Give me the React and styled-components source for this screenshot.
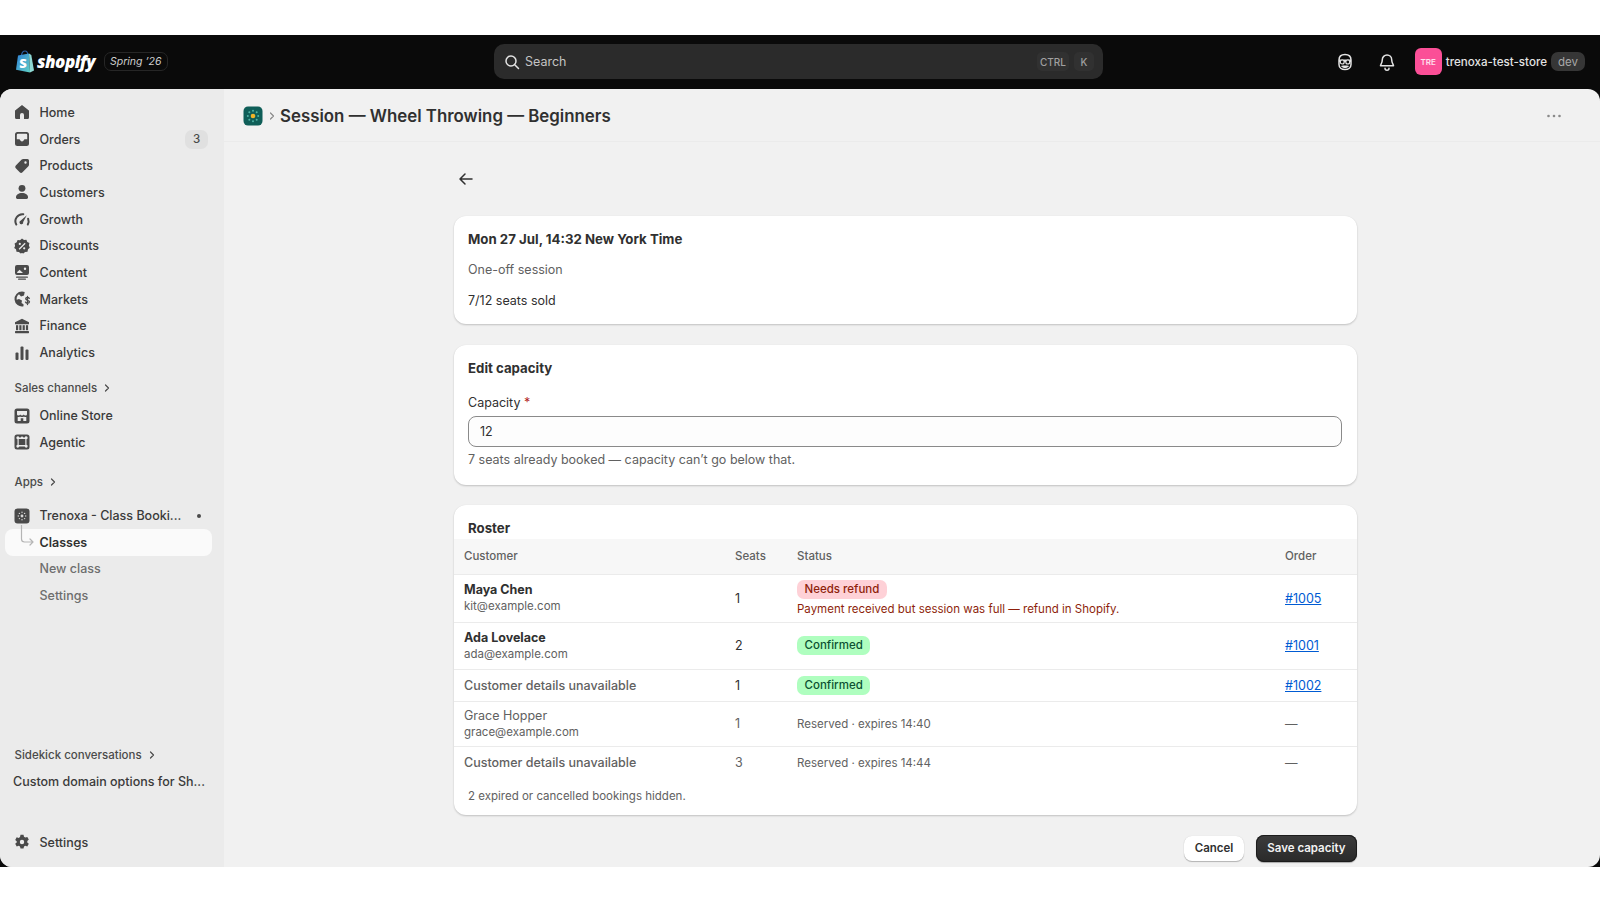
import React from "react";
import styled, { createGlobalStyle } from "styled-components";

const GlobalStyle = createGlobalStyle`
  html, body {
    margin: 0;
    padding: 0;
    height: 100%;
    background: #fff;
    overflow: hidden;
  }
  * { box-sizing: border-box; }
  body {
    font-family: Inter, "Noto Sans", sans-serif;
    font-size: 12.5px;
    color: #303030;
  }
`;

const Page = styled.div`
  display: flex;
  flex-direction: column;
  height: 900px;
  background: #fff;
`;

const Band = styled.div`
  flex: 0 0 ${(p) => p.$h}px;
  background: #fff;
`;

const Shell = styled.div`
  flex: 1;
  min-height: 0;
  display: flex;
  flex-direction: column;
  background: #0a0a0a;
`;

const TopBar = styled.header`
  flex: 0 0 54px;
  display: flex;
  align-items: center;
  padding: 0 15px;
`;

const Brand = styled.div`
  width: 479px;
  display: flex;
  align-items: center;
`;

const LogoText = styled.span`
  font-family: "Open Sans", sans-serif;
  font-style: italic;
  font-weight: 800;
  font-size: 17px;
  letter-spacing: -0.5px;
  color: #fff;
  margin-left: 2px;
`;

const SeasonPill = styled.span`
  margin-left: 9px;
  height: 19px;
  padding: 0 5px;
  display: inline-flex;
  align-items: center;
  border: 1px solid #262626;
  border-radius: 7px;
  font-size: 10.5px;
  font-style: italic;
  color: #cfcfcf;
`;

const SearchBox = styled.div`
  width: 609px;
  height: 35px;
  display: flex;
  align-items: center;
  gap: 3px;
  padding: 0 9px 0 8px;
  background: #2b2b2b;
  border-radius: 10px;
  color: #c4c4c4;
  font-size: 12.5px;
`;

const SearchLabel = styled.span`
  flex: 1;
`;

const Kbd = styled.span`
  height: 19px;
  margin-left: 2px;
  padding: 0 3px;
  display: inline-flex;
  align-items: center;
  justify-content: center;
  min-width: 20px;
  background: #313131;
  border-radius: 5px;
  font-size: 10px;
  font-weight: 500;
  color: #a0a0a0;
`;

const TopActions = styled.div`
  margin-left: auto;
  display: flex;
  align-items: center;
`;

const TopIcon = styled.span`
  width: 20px;
  height: 20px;
  margin-right: ${(p) => p.$gap}px;
  display: inline-flex;
  color: #e3e3e3;
`;

const Avatar = styled.span`
  width: 27px;
  height: 27px;
  display: inline-flex;
  align-items: center;
  justify-content: center;
  background: #fb4f97;
  border-radius: 6px;
  font-size: 8px;
  font-weight: 600;
  color: #ffe0ee;
`;

const StoreName = styled.span`
  margin-left: 4px;
  font-weight: 550;
  font-size: 11.6px;
  color: #e3e3e3;
`;

const DevPill = styled.span`
  margin-left: 4px;
  height: 19px;
  padding: 0 7px;
  display: inline-flex;
  align-items: center;
  background: #363636;
  border-radius: 7px;
  font-size: 11.5px;
  color: #a8a8a8;
`;

const Body = styled.div`
  flex: 1;
  min-height: 0;
  display: flex;
  border-radius: 12px;
  overflow: hidden;
  background: #f1f1f1;
`;

const Sidebar = styled.aside`
  flex: 0 0 224px;
  display: flex;
  flex-direction: column;
  padding: 10.5px 0 11.5px;
  background: #ebebeb;
`;

const NavItem = styled.div`
  position: relative;
  flex: 0 0 26.7px;
  display: flex;
  align-items: center;
  gap: 7.5px;
  padding-left: 12px;
  padding-right: 16px;
  font-weight: 550;
  color: #3a3a3a;
  white-space: nowrap;
`;

const NavIcon = styled.span`
  width: 20px;
  height: 20px;
  display: inline-flex;
  color: #4a4a4a;
`;

const NavLabel = styled.span`
  flex: 1;
`;

const CountBadge = styled.span`
  width: 23px;
  height: 19px;
  display: inline-flex;
  align-items: center;
  justify-content: center;
  background: #e0e0e0;
  border-radius: 7px;
  font-size: 11.5px;
  color: #4a4a4a;
`;

const PinDot = styled.span`
  width: 4px;
  height: 4px;
  margin-right: 7px;
  border-radius: 50%;
  background: #4a4a4a;
`;

const SubItem = styled.div`
  position: relative;
  flex: 0 0 26.7px;
  display: flex;
  align-items: center;
  margin: 0 12px 0 5px;
  padding-left: 34.5px;
  border-radius: 8px;
  font-weight: ${(p) => (p.$active ? 600 : 500)};
  color: ${(p) => (p.$active ? "#303030" : "#6e6e6e")};
  background: ${(p) => (p.$active ? "#fafafa" : "transparent")};
`;

const Elbow = styled.svg`
  position: absolute;
  left: 15px;
  top: -4px;
  width: 20px;
  height: 24px;
`;

const SectionLabel = styled.div`
  flex: 0 0 26.7px;
  margin-top: ${(p) => p.$top || 0}px;
  display: flex;
  align-items: center;
  gap: 5px;
  padding-left: 14.5px;
  font-size: 11.5px;
  font-weight: 550;
  color: #4a4a4a;
`;

const Conversation = styled.div`
  flex: 0 0 26.7px;
  display: flex;
  align-items: center;
  padding-left: 13px;
  font-weight: 550;
  color: #3a3a3a;
`;

const Gap = styled.div`
  flex: ${(p) => (p.$h ? `0 0 ${p.$h}px` : 1)};
`;

const Main = styled.main`
  flex: 1;
  min-width: 0;
  display: flex;
  flex-direction: column;
`;

const TitleBar = styled.div`
  flex: 0 0 53px;
  display: flex;
  align-items: center;
  padding: 2px 38px 0 19px;
  border-bottom: 1px solid #ebebeb;
`;

const Crumb = styled.span`
  margin: 0 3.5px;
  display: inline-flex;
  color: #8a8a8a;
`;

const PageTitle = styled.h1`
  flex: 1;
  margin: 0;
  font-size: 16.85px;
  font-weight: 600;
  color: #303030;
`;

const Content = styled.div`
  width: 903px;
  margin-left: 229.5px;
  padding-top: 25px;
  display: flex;
  flex-direction: column;
`;

const BackLink = styled.span`
  height: 24px;
  margin-bottom: 25px;
  padding-left: 2px;
  display: flex;
  align-items: center;
  color: #303030;
`;

const Card = styled.section`
  margin-bottom: 20.5px;
  padding: ${(p) => p.$pad || "13px 14.5px 13.5px"};
  background: #fff;
  border-radius: 12px;
  box-shadow: 0 1px 2px rgba(0, 0, 0, 0.2), 0 0 1px rgba(0, 0, 0, 0.06);
  overflow: hidden;
`;

const CardTitle = styled.h2`
  margin: 0 0 ${(p) => p.$gap ?? 11}px;
  font-size: 13.25px;
  line-height: 20px;
  font-weight: 650;
  color: #303030;
`;

const CardText = styled.p`
  margin: ${(p) => p.$top || 0}px 0 0;
  line-height: 20px;
  color: ${(p) => (p.$muted ? "#616161" : "#303030")};
`;

const FieldLabel = styled.label`
  display: block;
  line-height: 20px;
  color: #303030;
`;

const Required = styled.span`
  color: #b3261e;
`;

const CapacityInput = styled.input`
  display: block;
  width: 100%;
  height: 31px;
  margin-top: 3px;
  padding: 0 11px;
  background: #fdfdfd;
  border: 1px solid #8a8a8a;
  border-radius: 8px;
  font: inherit;
  color: #303030;
`;

const Hint = styled.div`
  margin: 3px 0 1.5px;
  line-height: 20px;
  color: #616161;
`;

const RosterTitle = styled.h2`
  margin: 0;
  padding: 12.5px 14.5px 0;
  height: 34px;
  font-size: 13.25px;
  line-height: 20px;
  font-weight: 650;
  color: #303030;
`;

const Table = styled.table`
  width: 100%;
  table-layout: fixed;
  border-collapse: collapse;
`;

const Th = styled.th`
  height: 35px;
  padding: 0 10.5px;
  text-align: left;
  font-size: 11.5px;
  font-weight: 550;
  color: #616161;
  background: #f7f7f7;
  border-bottom: 1px solid #ebebeb;
`;

const Row = styled.tr`
  height: ${(p) => p.$h}px;
  border-bottom: ${(p) => (p.$last ? "none" : "1px solid #ebebeb")};
`;

const Td = styled.td`
  padding: 0 10.5px;
  vertical-align: middle;
  line-height: 17px;
  color: ${(p) => (p.$muted ? "#616161" : "#303030")};
`;

const Name = styled.div`
  font-weight: ${(p) => p.$weight || 650};
  color: ${(p) => (p.$muted ? "#616161" : "#303030")};
`;

const Email = styled.div`
  font-size: 11.5px;
  color: #616161;
`;

const Badge = styled.span`
  display: inline-flex;
  align-items: center;
  height: 19px;
  padding: 0 7.5px;
  border-radius: 7px;
  font-size: 11.5px;
  font-weight: 500;
  color: ${(p) => (p.$tone === "critical" ? "#8e1f0b" : "#0c5132")};
  background: ${(p) => (p.$tone === "critical" ? "#fed1d7" : "#affebf")};
`;

const RefundNote = styled.div`
  margin-top: 2px;
  font-size: 11.5px;
  line-height: 16px;
  color: #8e1f0b;
`;

const Reserved = styled.span`
  font-size: 11.5px;
  color: #616161;
`;

const OrderLink = styled.a`
  color: #005bd3;
  text-decoration: underline;
`;

const TableNote = styled.div`
  padding: 9px 14.5px 11px;
  font-size: 11.5px;
  line-height: 16px;
  color: #616161;
`;

const Actions = styled.div`
  margin-top: -1px;
  display: flex;
  justify-content: flex-end;
  align-items: center;
  gap: 12px;
`;

const Button = styled.button`
  height: ${(p) => (p.$primary ? 27 : 25)}px;
  padding: 0 11px;
  border: none;
  border-radius: 8px;
  font-family: inherit;
  font-size: 11.5px;
  font-weight: 600;
  color: ${(p) => (p.$primary ? "#f2f2f2" : "#303030")};
  background: ${(p) => (p.$primary ? "linear-gradient(#3c3c3c, #2a2a2a)" : "#fff")};
  box-shadow: ${(p) =>
    p.$primary
      ? "0 0 0 1px #1c1c1c inset, 0 1px 1px rgba(0,0,0,.3)"
      : "0 1px 1px rgba(0,0,0,.25), 0 0 1px rgba(0,0,0,.15)"};
`;

const Svg = ({ children, size = 20 }) => (
  <svg width={size} height={size} viewBox="0 0 20 20" fill="currentColor">
    {children}
  </svg>
);

const icons = {
  home: (
    <Svg>
      <path d="M10 3 3.4 8.3c-.3.2-.4.5-.4.8V15.500a1.500 1.500 0 0 0 1.500 1.500H8v-4a2 2 0 0 1 4 0v4h3.500a1.500 1.500 0 0 0 1.500-1.500V9.100c0-.3-.1-.6-.4-.8Z" />
    </Svg>
  ),
  orders: (
    <Svg>
      <path
        fillRule="evenodd"
        d="M5.500 3h9A2.500 2.500 0 0 1 17 5.500v9a2.500 2.500 0 0 1-2.500 2.500h-9A2.500 2.500 0 0 1 3 14.500v-9A2.500 2.500 0 0 1 5.500 3ZM4.800 10.300V6a1.200 1.200 0 0 1 1.200-1.200h8A1.200 1.200 0 0 1 15.200 6v4.300h-2.400c-.5 0-.8.3-.9.800a2 2 0 0 1-3.800 0c-.1-.5-.4-.8-.9-.8Z"
      />
    </Svg>
  ),
  products: (
    <Svg>
      <path
        fillRule="evenodd"
        d="M11.200 3h4.300A1.500 1.500 0 0 1 17 4.500v4.300c0 .6-.2 1.100-.6 1.500l-5.900 5.900a2 2 0 0 1-2.800 0l-3.900-3.900a2 2 0 0 1 0-2.800l5.900-5.900c.4-.4.9-.6 1.500-.6Zm2.300 2.300a1.200 1.200 0 1 0 0 2.400 1.200 1.200 0 0 0 0-2.400Z"
      />
    </Svg>
  ),
  customers: (
    <Svg>
      <circle cx="10" cy="6.300" r="3.400" />
      <path d="M4 15c0-2.300 2.500-4 6-4s6 1.700 6 4v.6c0 .8-.6 1.400-1.400 1.400H5.400C4.600 17 4 16.400 4 15.600Z" />
    </Svg>
  ),
  growth: (
    <Svg>
      <path d="M4.300 15.500a7 7 0 0 1 7-10.300" fill="none" stroke="currentColor" strokeWidth="2" strokeLinecap="round" />
      <path d="M15.800 15.500a7 7 0 0 0 .3-5.800" fill="none" stroke="currentColor" strokeWidth="2" strokeLinecap="round" />
      <path d="M14.800 6.200 11.200 13a1.900 1.900 0 1 1-2.700-1.300Z" />
    </Svg>
  ),
  discounts: (
    <Svg>
      <path
        fillRule="evenodd"
        d="M10 2.500 12 3.900l2.400-.2.900 2.200 2.100 1.200-.5 2.400.9 2.200-1.800 1.600-.5 2.400-2.400.3L11.300 17.500 10 17l-1.300.5-1.800-1.500-2.400-.3-.5-2.400L2.200 12.100l.9-2.200-.5-2.400 2.100-1.200.9-2.200 2.400.2ZM7.800 6.800a1.100 1.100 0 1 0 0 2.200 1.100 1.100 0 0 0 0-2.200Zm4.400 4.400a1.100 1.100 0 1 0 0 2.200 1.100 1.100 0 0 0 0-2.200Zm.5-4.400-6 6 .9.900 6-6Z"
      />
    </Svg>
  ),
  content: (
    <Svg>
      <path
        fillRule="evenodd"
        d="M5 3h10a2 2 0 0 1 2 2v6a2 2 0 0 1-2 2H5a2 2 0 0 1-2-2V5a2 2 0 0 1 2-2Zm8 2.500a1.200 1.200 0 1 0 0 2.400 1.200 1.200 0 0 0 0-2.400ZM5 10.200l2.600-2.500 3.400 3.300H5.800a.8.800 0 0 1-.8-.8Z"
      />
      <rect x="4" y="14.500" width="12" height="1.300" rx=".65" />
      <rect x="6" y="16.500" width="8" height="1.300" rx=".65" />
    </Svg>
  ),
  markets: (
    <Svg>
      <path d="M10 2.500a7.500 7.500 0 1 0 1.500 14.850V15.200l-2-1.200.5-2.500-3-1.500-2.300.8A5.700 5.700 0 0 1 7 5.300L9 7.500l3-1 .7-3.400A7.500 7.500 0 0 0 10 2.500Z" />
      <path d="M17.300 9.400c-.3-.7-1-1-1.800-1-1 0-1.800.5-1.800 1.400 0 1.900 3.800 1 3.800 3 0 1-.9 1.500-2 1.500-.9 0-1.700-.4-2-1.200M15.500 7.500v8" fill="none" stroke="currentColor" strokeWidth="1.300" strokeLinecap="round" />
    </Svg>
  ),
  finance: (
    <Svg>
      <path d="M10 2.800 3 6.300v1.900h14V6.300Z" />
      <rect x="4" y="9.200" width="2.200" height="5" />
      <rect x="7.300" y="9.200" width="2.200" height="5" />
      <rect x="10.600" y="9.200" width="2.200" height="5" />
      <rect x="13.900" y="9.200" width="2.200" height="5" />
      <rect x="3" y="15" width="14" height="2.200" rx=".6" />
    </Svg>
  ),
  analytics: (
    <Svg>
      <rect x="3.500" y="9.500" width="3" height="7.500" rx="1" />
      <rect x="8.500" y="3.500" width="3" height="13.500" rx="1" />
      <rect x="13.500" y="6.500" width="3" height="10.500" rx="1" />
    </Svg>
  ),
  store: (
    <Svg>
      <path
        fillRule="evenodd"
        d="M5 2.500h10A2.500 2.500 0 0 1 17.500 5v10a2.500 2.500 0 0 1-2.500 2.500H5A2.500 2.500 0 0 1 2.500 15V5A2.500 2.500 0 0 1 5 2.500ZM5 5v3.200c0 .9.700 1.400 1.600 1.400.8 0 1.400-.4 1.700-1 .3.600.9 1 1.700 1s1.400-.4 1.700-1c.3.600.9 1 1.700 1 .9 0 1.600-.5 1.600-1.400V5Zm.7 6v3.900h3v-2.700h2.600v2.700h3V11c-1 .2-1.800 0-2.300-.5-.5.4-1.200.6-2 .6s-1.500-.2-2-.6c-.5.5-1.300.7-2.300.5Z"
      />
    </Svg>
  ),
  agentic: (
    <Svg>
      <path
        fillRule="evenodd"
        d="M5 2.500h10A2.500 2.500 0 0 1 17.500 5v10a2.500 2.500 0 0 1-2.500 2.500H5A2.500 2.500 0 0 1 2.500 15V5A2.500 2.500 0 0 1 5 2.500Zm5 2a1.500 1.500 0 0 0-1.400 1H7.300a1.500 1.500 0 1 0-1.800 1.800v5.400a1.500 1.500 0 1 0 1.800 1.800h5.400a1.500 1.500 0 1 0 1.800-1.800V7.300a1.500 1.500 0 1 0-1.800-1.800h-1.300A1.500 1.500 0 0 0 10 4.500ZM6.700 7h6.600v6H6.700Z"
      />
    </Svg>
  ),
  app: (
    <Svg>
      <rect x="2.500" y="2.500" width="15" height="15" rx="3" />
      <g fill="#d9d9d9">
        <circle cx="10" cy="10" r="1.400" />
        <circle cx="10" cy="6.300" r=".7" />
        <circle cx="10" cy="13.700" r=".7" />
        <circle cx="6.300" cy="10" r=".7" />
        <circle cx="13.700" cy="10" r=".7" />
        <circle cx="7.400" cy="7.400" r=".7" />
        <circle cx="12.600" cy="7.400" r=".7" />
        <circle cx="7.400" cy="12.600" r=".7" />
        <circle cx="12.600" cy="12.600" r=".7" />
      </g>
    </Svg>
  ),
  settings: (
    <Svg>
      <path
        fillRule="evenodd"
        d="M8.500 2.700h3l.5 2 1.300.8 2-.6 1.500 2.600-1.500 1.400v1.500l1.500 1.400-1.500 2.600-2-.6-1.300.8-.5 2h-3l-.5-2-1.300-.8-2 .6-1.500-2.600 1.500-1.400V9.300L3.200 7.900 4.700 5.300l2 .6L8 5.100ZM10 7.800a2.200 2.200 0 1 0 0 4.400 2.200 2.200 0 0 0 0-4.400Z"
      />
    </Svg>
  ),
};

const ShopifyBag = () => (
  <svg width="20" height="23" viewBox="0 0 20 23">
    <defs>
      <linearGradient id="bagFill" x1="0" y1="0" x2="1" y2="1">
        <stop offset="0" stopColor="#2f80d8" />
        <stop offset="1" stopColor="#5fd0c5" />
      </linearGradient>
    </defs>
    <path d="M6.500 5.500C6.800 2.800 8.400 1 10 1s2.600 1.500 2.800 3.700" fill="none" stroke="#2c5fa8" strokeWidth="1.200" />
    <path d="M3 5.600 14 3.500l1 19-14-2.700Z" fill="url(#bagFill)" />
    <path d="M14 3.500 16.300 5 19 20.600l-4 1.900Z" fill="#8fd9d4" />
    <text x="4.300" y="17.500" fontFamily="Open Sans" fontWeight="800" fontSize="13" fill="#fff">
      S
    </text>
  </svg>
);

const SidekickIcon = () => (
  <Svg>
    <path d="M10 2.500c-3.800 0-6 2.300-6 5.500v4.500c0 3 2.500 5 6 5s6-2 6-5V8c0-3.200-2.200-5.500-6-5.500Z" fill="none" stroke="currentColor" strokeWidth="1.500" />
    <path d="M4 7.500h12V10H4Z" />
    <circle cx="7.200" cy="10" r="2" fill="#0a0a0a" stroke="currentColor" strokeWidth="1.200" />
    <circle cx="12.800" cy="10" r="2" fill="#0a0a0a" stroke="currentColor" strokeWidth="1.200" />
    <path d="M6 14c1 1.500 2.500 2 4 2s3-.5 4-2l-2-.6H8Z" />
  </Svg>
);

const BellIcon = () => (
  <Svg>
    <path d="M10 3a4.700 4.700 0 0 0-4.700 4.700c0 3.500-1.800 5-1.800 6h13c0-1-1.800-2.500-1.800-6A4.700 4.700 0 0 0 10 3Z" fill="none" stroke="currentColor" strokeWidth="1.500" strokeLinejoin="round" />
    <path d="M8 16.200a2 2 0 0 0 4 0" fill="none" stroke="currentColor" strokeWidth="1.500" strokeLinecap="round" />
  </Svg>
);

const SearchIcon = () => (
  <Svg>
    <circle cx="9" cy="9" r="5" fill="none" stroke="#e3e3e3" strokeWidth="1.500" />
    <path d="m13 13 3.500 3.500" stroke="#e3e3e3" strokeWidth="1.500" strokeLinecap="round" />
  </Svg>
);

const Chevron = ({ size = 10 }) => (
  <svg width={size} height={size} viewBox="0 0 10 10" fill="none">
    <path d="m3.500 2 3 3-3 3" stroke="currentColor" strokeWidth="1.200" strokeLinecap="round" strokeLinejoin="round" />
  </svg>
);

const AppMark = () => (
  <svg width="20" height="20" viewBox="0 0 20 20">
    <rect x=".5" y=".5" width="19" height="19" rx="4.500" fill="#0f5e58" />
    <g fill="#4fb3a4">
      <circle cx="10" cy="4.800" r="1" />
      <circle cx="10" cy="15.200" r="1" />
      <circle cx="4.800" cy="10" r="1" />
      <circle cx="15.200" cy="10" r="1" />
      <circle cx="6.300" cy="6.300" r="1" />
      <circle cx="13.700" cy="6.300" r="1" />
      <circle cx="6.300" cy="13.700" r="1" />
      <circle cx="13.700" cy="13.700" r="1" />
    </g>
    <circle cx="10" cy="10" r="2.300" fill="#f0b429" />
  </svg>
);

const BackArrow = () => (
  <svg width="20" height="20" viewBox="0 0 20 20" fill="none">
    <path d="M16 10H4.500M9 5l-5 5 5 5" stroke="currentColor" strokeWidth="1.500" strokeLinecap="round" strokeLinejoin="round" />
  </svg>
);

const DotsIcon = () => (
  <svg width="16" height="16" viewBox="0 0 16 16" fill="#8a8a8a">
    <circle cx="2.500" cy="8" r="1.300" />
    <circle cx="8" cy="8" r="1.300" />
    <circle cx="13.500" cy="8" r="1.300" />
  </svg>
);

const mainNav = [
  ["home", "Home"],
  ["orders", "Orders", 3],
  ["products", "Products"],
  ["customers", "Customers"],
  ["growth", "Growth"],
  ["discounts", "Discounts"],
  ["content", "Content"],
  ["markets", "Markets"],
  ["finance", "Finance"],
  ["analytics", "Analytics"],
];

function Item({ icon, label, count, pinned }) {
  return (
    <NavItem>
      <NavIcon>{icons[icon]}</NavIcon>
      <NavLabel>{label}</NavLabel>
      {count ? <CountBadge>{count}</CountBadge> : null}
      {pinned ? <PinDot /> : null}
    </NavItem>
  );
}

function App() {
  return (
    <Page>
      <GlobalStyle />
      <Band $h={34.5} />
      <Shell>
        <TopBar>
          <Brand>
            <ShopifyBag />
            <LogoText>shopify</LogoText>
            <SeasonPill>Spring ’26</SeasonPill>
          </Brand>
          <SearchBox>
            <SearchIcon />
            <SearchLabel>Search</SearchLabel>
            <Kbd>CTRL</Kbd>
            <Kbd>K</Kbd>
          </SearchBox>
          <TopActions>
            <TopIcon $gap={22}>
              <SidekickIcon />
            </TopIcon>
            <TopIcon $gap={18}>
              <BellIcon />
            </TopIcon>
            <Avatar>TRE</Avatar>
            <StoreName>trenoxa-test-store</StoreName>
            <DevPill>dev</DevPill>
          </TopActions>
        </TopBar>
        <Body>
          <Sidebar>
            {mainNav.map(([icon, label, count]) => (
              <Item key={label} icon={icon} label={label} count={count} />
            ))}
            <SectionLabel $top={9}>
              Sales channels <Chevron />
            </SectionLabel>
            <Gap $h={0.6} />
            <Item icon="store" label="Online Store" />
            <Item icon="agentic" label="Agentic" />
            <SectionLabel $top={13}>
              Apps <Chevron />
            </SectionLabel>
            <Gap $h={7} />
            <Item icon="app" label="Trenoxa - Class Booki..." pinned />
            <SubItem $active>
              <Elbow viewBox="0 0 20 24" fill="none">
                <path d="M1.500 0v14a3 3 0 0 0 3 3H13m-3-3 3 3-3 3" stroke="#b5b5b5" strokeWidth="1.200" strokeLinecap="round" strokeLinejoin="round" />
              </Elbow>
              Classes
            </SubItem>
            <SubItem>New class</SubItem>
            <SubItem>Settings</SubItem>
            <Gap />
            <SectionLabel>
              Sidekick conversations <Chevron />
            </SectionLabel>
            <Conversation>Custom domain options for Sh...</Conversation>
            <Gap $h={34} />
            <Item icon="settings" label="Settings" />
          </Sidebar>
          <Main>
            <TitleBar>
              <AppMark />
              <Crumb>
                <Chevron size={10} />
              </Crumb>
              <PageTitle>Session — Wheel Throwing — Beginners</PageTitle>
              <DotsIcon />
            </TitleBar>
            <Content>
              <BackLink>
                <BackArrow />
              </BackLink>
              <Card>
                <CardTitle>Mon 27 Jul, 14:32 New York Time</CardTitle>
                <CardText $muted>One-off session</CardText>
                <CardText $top={11}>7/12 seats sold</CardText>
              </Card>
              <Card>
                <CardTitle $gap={15}>Edit capacity</CardTitle>
                <FieldLabel>
                  Capacity <Required>*</Required>
                </FieldLabel>
                <CapacityInput defaultValue="12" />
                <Hint>7 seats already booked — capacity can’t go below that.</Hint>
              </Card>
              <Card $pad="0">
                <RosterTitle>Roster</RosterTitle>
                <Table>
                  <colgroup>
                    <col width="271" />
                    <col width="62" />
                    <col width="488" />
                    <col />
                  </colgroup>
                  <thead>
                    <tr>
                      <Th>Customer</Th>
                      <Th>Seats</Th>
                      <Th>Status</Th>
                      <Th>Order</Th>
                    </tr>
                  </thead>
                  <tbody>
                    <Row $h={48}>
                      <Td>
                        <Name>Maya Chen</Name>
                        <Email>kit@example.com</Email>
                      </Td>
                      <Td>1</Td>
                      <Td>
                        <Badge $tone="critical">Needs refund</Badge>
                        <RefundNote>Payment received but session was full — refund in Shopify.</RefundNote>
                      </Td>
                      <Td>
                        <OrderLink href="#">#1005</OrderLink>
                      </Td>
                    </Row>
                    <Row $h={47}>
                      <Td>
                        <Name>Ada Lovelace</Name>
                        <Email>ada@example.com</Email>
                      </Td>
                      <Td>2</Td>
                      <Td>
                        <Badge>Confirmed</Badge>
                      </Td>
                      <Td>
                        <OrderLink href="#">#1001</OrderLink>
                      </Td>
                    </Row>
                    <Row $h={32}>
                      <Td>
                        <Name $weight={550} $muted>
                          Customer details unavailable
                        </Name>
                      </Td>
                      <Td>1</Td>
                      <Td>
                        <Badge>Confirmed</Badge>
                      </Td>
                      <Td>
                        <OrderLink href="#">#1002</OrderLink>
                      </Td>
                    </Row>
                    <Row $h={45}>
                      <Td>
                        <Name $weight={400} $muted>
                          Grace Hopper
                        </Name>
                        <Email>grace@example.com</Email>
                      </Td>
                      <Td $muted>1</Td>
                      <Td>
                        <Reserved>Reserved · expires 14:40</Reserved>
                      </Td>
                      <Td $muted>—</Td>
                    </Row>
                    <Row $h={33} $last>
                      <Td>
                        <Name $weight={450} $muted>
                          Customer details unavailable
                        </Name>
                      </Td>
                      <Td $muted>3</Td>
                      <Td>
                        <Reserved>Reserved · expires 14:44</Reserved>
                      </Td>
                      <Td $muted>—</Td>
                    </Row>
                  </tbody>
                </Table>
                <TableNote>2 expired or cancelled bookings hidden.</TableNote>
              </Card>
              <Actions>
                <Button>Cancel</Button>
                <Button $primary>Save capacity</Button>
              </Actions>
            </Content>
          </Main>
        </Body>
      </Shell>
      <Band $h={33} />
    </Page>
  );
}

export default App;
